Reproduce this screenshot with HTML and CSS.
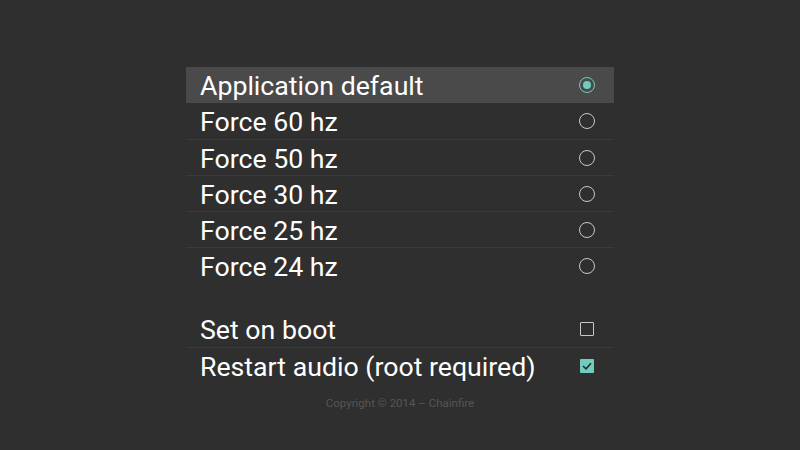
FILE: index.html
```html
<!DOCTYPE html>
<html>
<head>
<meta charset="utf-8">
<link rel="stylesheet" href="styles.css">
</head>
<body>
<div class="panel">
  <ul class="list">
    <li class="row selected"><span class="label">Application default</span><span class="radio on"></span></li>
    <li class="row"><span class="label">Force 60 hz</span><span class="radio"></span></li>
    <li class="row div"><span class="label">Force 50 hz</span><span class="radio"></span></li>
    <li class="row div"><span class="label">Force 30 hz</span><span class="radio"></span></li>
    <li class="row div"><span class="label">Force 25 hz</span><span class="radio"></span></li>
    <li class="row div"><span class="label">Force 24 hz</span><span class="radio"></span></li>
  </ul>
  <ul class="list opts">
    <li class="row"><span class="label">Set on boot</span><span class="check"></span></li>
    <li class="row div"><span class="label">Restart audio (root required)</span><span class="check on"><svg width="10" height="8" viewBox="0 0 10 8"><path d="M1 4 L4 6.8 L9 1.2" fill="none" stroke="#2a2a2a" stroke-width="1.6"/></svg></span></li>
  </ul>
  <div class="copy">Copyright © 2014 – Chainfire</div>
</div>
</body>
</html>
```
FILE: styles.css
```css
html, body {
  margin: 0;
  padding: 0;
  background: #2f2f2f;
  width: 800px;
  height: 450px;
  overflow: hidden;
  font-family: Roboto, "Noto Sans", sans-serif;
}
.panel {
  width: 428px;
  margin: 67px auto 0 186px;
  display: flex;
  flex-direction: column;
}
.list {
  list-style: none;
  margin: 0;
  padding: 0;
}
.opts {
  margin-top: 28px;
}
.row {
  height: 36px;
  display: flex;
  align-items: center;
  justify-content: space-between;
  padding: 0 19px 0 14px;
  box-sizing: border-box;
  color: #ffffff;
  font-size: 26.7px;
}
.row.div {
  border-top: 1px solid #3b3b3b;
}
.row.selected {
  background: #4a4a4a;
}
.label {
  line-height: 36px;
  padding-top: 2px;
}
.radio {
  width: 16px;
  height: 16px;
  box-sizing: border-box;
  border: 1.6px solid #c8c8c8;
  border-radius: 50%;
  display: flex;
  align-items: center;
  justify-content: center;
}
.radio.on {
  border-color: #6fcdbf;
}
.radio.on::after {
  content: "";
  width: 8px;
  height: 8px;
  border-radius: 50%;
  background: #6fcdbf;
}
.check {
  width: 14px;
  height: 14px;
  box-sizing: border-box;
  border: 1.6px solid #c8c8c8;
  border-radius: 1px;
  margin-right: 1px;
  display: flex;
  align-items: center;
  justify-content: center;
}
.check.on {
  background: #6fcdbf;
  border: none;
}
.copy {
  text-align: center;
  color: #565656;
  font-size: 11.5px;
  margin-top: 13px;
}
```
